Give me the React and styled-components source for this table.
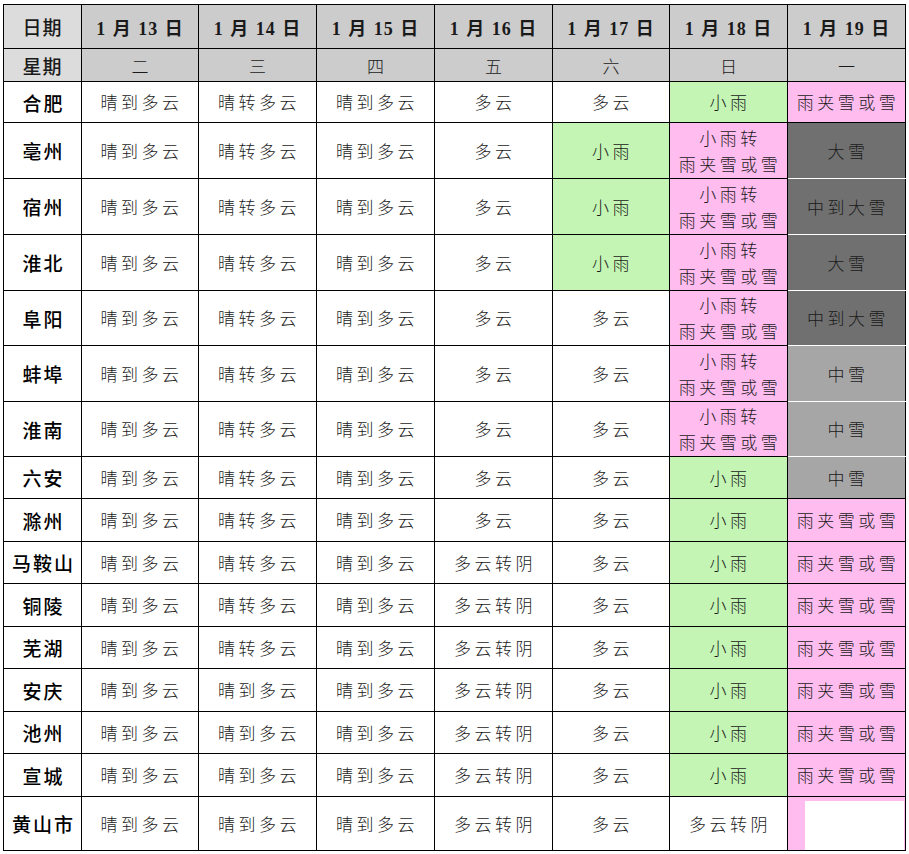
import React from "react";
import styled, { createGlobalStyle } from "styled-components";

const Global = createGlobalStyle`
  html, body { margin: 0; padding: 0; background: #fff; }
  body { font-family: "Noto Sans CJK SC", "Liberation Serif", serif; }
`;

const Page = styled.div`
  padding: 4px 0 0 3px;
`;

const Table = styled.table`
  border-collapse: collapse;
  table-layout: fixed;
  width: 902px;
  border: 1.5px solid #000;
`;

const Row = styled.tr`
  height: ${(p) => p.$h}px;
`;

const BaseCell = styled.td`
  border: 1px solid #000;
  padding: 0;
  text-align: center;
  vertical-align: middle;
  color: #1a1a1a;
  overflow: hidden;
`;

const CornerCell = styled(BaseCell)`
  background: #dcdcdc;
  font-family: "Noto Sans CJK SC", sans-serif;
  font-weight: 500;
  font-size: 19px;
  letter-spacing: 1px;
`;

const DateCell = styled(BaseCell)`
  background: #cccccc;
  font-family: "Liberation Serif", "Noto Sans CJK SC", serif;
  font-weight: 700;
  font-size: 18px;
  letter-spacing: 1px;
  word-spacing: 1px;
`;

const WeekCell = styled(BaseCell)`
  background: #cccccc;
  font-family: "Noto Sans CJK SC", sans-serif;
  font-weight: 300;
  font-size: 17px;
`;

const CityCell = styled(BaseCell)`
  font-family: "Noto Sans CJK SC", sans-serif;
  font-weight: 500;
  font-size: 19px;
  letter-spacing: 2px;
  padding-left: 2px;
  color: #000;
`;

const COLORS = {
  w: "#ffffff",
  g: "#c4f5b4",
  p: "#ffbcef",
  d: "#707070",
  m: "#a6a6a6",
};

const WxCell = styled(BaseCell)`
  background: ${(p) => COLORS[p.$c] || "#fff"};
  font-family: "Noto Sans CJK SC", sans-serif;
  font-weight: 300;
  font-size: 17px;
  letter-spacing: 3.5px;
  line-height: 26px;
  padding-left: 3px;
  ${(p) => (p.$wb ? "border-bottom-color: #ffffff;" : "")}
`;

const SplitCell = styled(BaseCell)`
  background: ${COLORS.p};
  padding: 4px 1px 0 17px;
  vertical-align: top;
`;

const Inset = styled.div`
  background: #fff;
  height: ${(p) => p.$h}px;
`;

const dates = ["13", "14", "15", "16", "17", "18", "19"];
const weeks = ["二", "三", "四", "五", "六", "日", "一"];

const A = "晴到多云";
const B = "晴转多云";
const C = "多云";
const D = "多云转阴";
const R = "小雨";
const S = "雨夹雪或雪";
const T = "小雨转\n雨夹雪或雪";

const rows = [
  { city: "合肥", h: 41, cells: [[A], [B], [A], [C], [C], [R, "g"], [S, "p"]] },
  { city: "亳州", h: 56, cells: [[A], [B], [A], [C], [R, "g"], [T, "p"], ["大雪", "d", true]] },
  { city: "宿州", h: 56, cells: [[A], [B], [A], [C], [R, "g"], [T, "p"], ["中到大雪", "d", true]] },
  { city: "淮北", h: 56, cells: [[A], [B], [A], [C], [R, "g"], [T, "p"], ["大雪", "d", true]] },
  { city: "阜阳", h: 55, cells: [[A], [B], [A], [C], [C], [T, "p"], ["中到大雪", "d", true]] },
  { city: "蚌埠", h: 56, cells: [[A], [B], [A], [C], [C], [T, "p"], ["中雪", "m", true]] },
  { city: "淮南", h: 55, cells: [[A], [B], [A], [C], [C], [T, "p"], ["中雪", "m", true]] },
  { city: "六安", h: 42, cells: [[A], [B], [A], [C], [C], [R, "g"], ["中雪", "m"]] },
  { city: "滁州", h: 43, cells: [[A], [B], [A], [C], [C], [R, "g"], [S, "p"]] },
  { city: "马鞍山", h: 42, cells: [[A], [B], [A], [D], [C], [R, "g"], [S, "p"]] },
  { city: "铜陵", h: 43, cells: [[A], [B], [A], [D], [C], [R, "g"], [S, "p"]] },
  { city: "芜湖", h: 42, cells: [[A], [B], [A], [D], [C], [R, "g"], [S, "p"]] },
  { city: "安庆", h: 43, cells: [[A], [A], [A], [D], [C], [R, "g"], [S, "p"]] },
  { city: "池州", h: 42, cells: [[A], [A], [A], [D], [C], [R, "g"], [S, "p"]] },
  { city: "宣城", h: 43, cells: [[A], [A], [A], [D], [C], [R, "g"], [S, "p"]] },
  { city: "黄山市", h: 54, cells: [[A], [A], [A], [D], [C], [D], null] },
];

const widths = [78, 117, 118, 118, 118, 117, 118, 118];

const Multi = ({ text }) =>
  text.split("\n").map((t, i, arr) => (
    <React.Fragment key={i}>
      {t}
      {i < arr.length - 1 && <br />}
    </React.Fragment>
  ));

export default function App() {
  return (
    <Page>
      <Global />
      <Table>
        <colgroup>
          {widths.map((w, i) => (
            <col key={i} style={{ width: w }} />
          ))}
        </colgroup>
        <tbody>
          <Row $h={44}>
            <CornerCell>日期</CornerCell>
            {dates.map((d) => (
              <DateCell key={d}>1 月 {d} 日</DateCell>
            ))}
          </Row>
          <Row $h={33}>
            <CornerCell>星期</CornerCell>
            {weeks.map((w) => (
              <WeekCell key={w}>{w}</WeekCell>
            ))}
          </Row>
          {rows.map((r) => (
            <Row key={r.city} $h={r.h}>
              <CityCell>{r.city}</CityCell>
              {r.cells.map((c, i) =>
                c ? (
                  <WxCell key={i} $c={c[1]} $wb={c[2]}>
                    <Multi text={c[0]} />
                  </WxCell>
                ) : (
                  <SplitCell key={i}>
                    <Inset $h={r.h - 5} />
                  </SplitCell>
                )
              )}
            </Row>
          ))}
        </tbody>
      </Table>
    </Page>
  );
}
